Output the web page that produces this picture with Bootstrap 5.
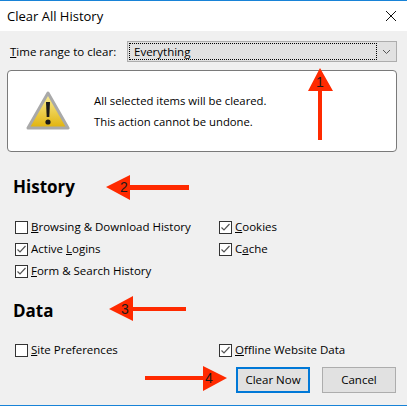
<!DOCTYPE html>
<html lang="en">
<head>
    <meta charset="UTF-8">
    <meta name="viewport" content="width=device-width, initial-scale=1.0">
    <title>Clear All History</title>
    <link href="https://cdn.jsdelivr.net/npm/bootstrap@5.3.0/dist/css/bootstrap.min.css" rel="stylesheet">
    <style>
        html, body { height: 406px; overflow: hidden; }
        body {
            font-family: "Open Sans", "Noto Sans", sans-serif;
            font-size: 11.5px;
            line-height: 16px;
            color: #000;
            background-color: #f0f0f0;
        }
        .dlg {
            position: relative;
            height: 406px;
            border-top: 1px solid #1883d7;
            border-bottom: 1px solid #1883d7;
        }
        .dlg-title { height: 30px; padding: 0 10px 0 7px; background-color: #fff; font-size: 13px; }
        .dlg-body { padding: 10px 10px 0 7px; }
        .range-label { width: 120px; padding-left: 3px; }
        .range-select {
            width: 270px;
            height: 21px;
            padding: 1px;
            background-color: #e1e1e1;
            border: 1px solid #adadad;
        }
        .range-value { height: 17px; padding-left: 4px; border: 1px dotted #000; }
        .range-arrow { width: 18px; }
        .warn-box {
            height: 82px;
            margin-top: 8px;
            padding-left: 18px;
            background-color: #fff;
            border: 1px solid #7a7a7a;
            border-radius: 4px;
            gap: 24px;
        }
        .warn-text { font-size: 11.3px; line-height: 21px; }
        .group-title { margin: 0; font-size: 17px; line-height: 22px; font-weight: 700; }
        .history-title { margin-top: 24px; padding-left: 6px; }
        .data-title { margin-top: 18px; padding-left: 6px; }
        .opt-grid { display: grid; grid-template-columns: 204px 1fr; grid-auto-rows: 22px; padding-left: 8px; }
        .history-grid { margin-top: 18px; }
        .data-grid { margin-top: 17px; }
        .opt { gap: 3px; }
        .opt-box { flex: none; width: 13px; height: 13px; background-color: #fff; border: 1px solid #333; }
        .opt-box svg { display: block; }
        .dlg-actions { gap: 12px; padding-top: 6px; padding-right: 1px; }
        .act-btn {
            width: 74px;
            height: 26px;
            padding: 0;
            font-size: 11.5px;
            color: #000;
            background-color: #e1e1e1;
            border: 1px solid #adadad;
            border-radius: 0;
        }
        .act-default { border: 2px solid #0078d7; }
        .marks { position: absolute; left: 0; top: -1px; pointer-events: none; }
        .marks text { font-family: "Liberation Sans", sans-serif; font-size: 14px; fill: #1a1a1a; text-anchor: middle; }
    </style>
</head>
<body>
    <div class="dlg">
        <div class="dlg-title d-flex align-items-center justify-content-between">
            <span>Clear All History</span>
            <svg width="12" height="12" viewBox="0 0 12 12"><path d="M1 1 L11 11 M11 1 L1 11" stroke="#111" stroke-width="1" fill="none"/></svg>
        </div>
        <div class="dlg-body">
            <div class="d-flex align-items-center">
                <label class="range-label"><u>T</u>ime range to clear:</label>
                <div class="range-select d-flex">
                    <div class="range-value flex-grow-1 d-flex align-items-center">Everything</div>
                    <div class="range-arrow d-flex align-items-center justify-content-center">
                        <svg width="9" height="6" viewBox="0 0 9 6"><path d="M1 1 L4.5 4.5 L8 1" stroke="#555" fill="none"/></svg>
                    </div>
                </div>
            </div>

            <div class="warn-box d-flex align-items-center">
                <svg width="44" height="40" viewBox="0 0 44 40">
                    <defs>
                        <linearGradient id="warnFill" x1="0" y1="0" x2="0" y2="1">
                            <stop offset="0" stop-color="#fbf09a"/>
                            <stop offset="1" stop-color="#e0b20c"/>
                        </linearGradient>
                    </defs>
                    <path d="M22 2 L42 37 L2 37 Z" fill="url(#warnFill)" stroke="#a9a9a9" stroke-width="3" stroke-linejoin="round"/>
                    <path d="M20 11 H24 L23.3 26 H20.7 Z" fill="#1a1a1a"/>
                    <circle cx="22" cy="31" r="2.6" fill="#1a1a1a"/>
                </svg>
                <div class="warn-text">
                    <div>All selected items will be cleared.</div>
                    <div>This action cannot be undone.</div>
                </div>
            </div>

            <h2 class="group-title history-title">History</h2>
            <div class="opt-grid history-grid" id="historyOpts"></div>

            <h2 class="group-title data-title">Data</h2>
            <div class="opt-grid data-grid" id="dataOpts"></div>

            <div class="dlg-actions d-flex justify-content-end">
                <button type="button" class="btn act-btn act-default">Clear Now</button>
                <button type="button" class="btn act-btn">Cancel</button>
            </div>
        </div>

        <svg class="marks" width="407" height="406" viewBox="0 0 407 406">
            <path d="M320 68 L333 91 L322 91 L322 140 L318 140 L318 91 L308 91 Z" fill="#ff2a00"/>
            <text x="320" y="87">1</text>
            <path d="M106 187 L130 175 L130 185 L189 185 L189 190 L130 190 L130 200 Z" fill="#ff2a00"/>
            <text x="124" y="192">2</text>
            <path d="M109 309 L133 296 L133 307 L186 307 L186 311 L133 311 L133 321 Z" fill="#ff2a00"/>
            <text x="125" y="314">3</text>
            <path d="M227 378 L203 366 L203 376 L145 376 L145 380 L203 380 L203 391 Z" fill="#ff2a00"/>
            <text x="209" y="383">4</text>
        </svg>
    </div>

    <script src="https://cdn.jsdelivr.net/npm/bootstrap@5.3.0/dist/js/bootstrap.bundle.min.js"></script>
    <script>
        // label, access key position, checked
        const historyOpts = [
            ["Browsing & Download History", 0, false],
            ["Cookies", 0, true],
            ["Active Logins", 7, true],
            ["Cache", 1, true],
            ["Form & Search History", 0, true],
        ];
        const dataOpts = [
            ["Site Preferences", 0, false],
            ["Offline Website Data", 0, true],
        ];

        function fillOpts(id, opts) {
            const box = document.getElementById(id);
            opts.forEach(([text, key, checked]) => {
                const row = document.createElement("div");
                row.className = "opt d-flex align-items-center";
                const tick = checked ? `<svg width="11" height="11" viewBox="0 0 11 11"><path d="M1.5 5.5 L4 8 L9.5 2" stroke="#555" stroke-width="1.2" fill="none"/></svg>` : "";
                const label = text.slice(0, key).replace("&", "&amp;") + "<u>" + text[key] + "</u>" + text.slice(key + 1).replace("&", "&amp;");
                row.innerHTML = `<span class="opt-box">${tick}</span><span>${label}</span>`;
                box.appendChild(row);
            });
        }

        fillOpts("historyOpts", historyOpts);
        fillOpts("dataOpts", dataOpts);
    </script>
</body>
</html>
